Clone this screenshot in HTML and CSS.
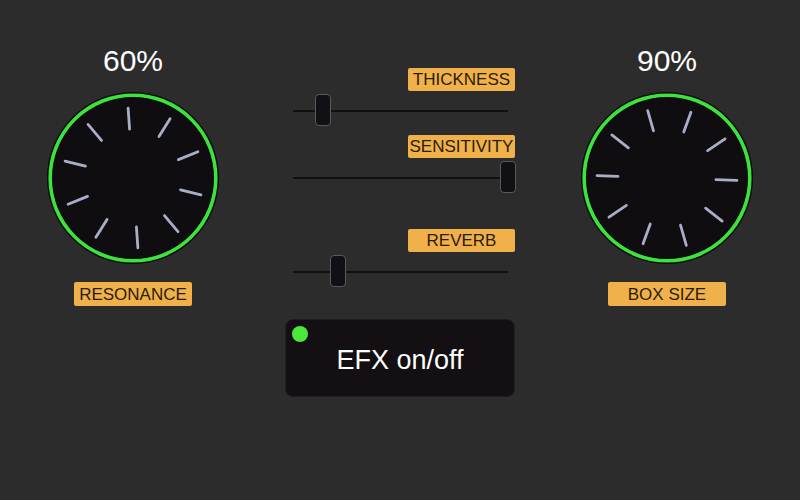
FILE: index.html
```html
<!DOCTYPE html>
<html lang="en">
<head>
    <meta charset="UTF-8">
    <meta name="viewport" content="width=device-width, initial-scale=1.0">
    <title>EFX Panel</title>
    <link rel="stylesheet" href="styles.css">
</head>
<body>
    <svg class="defs" width="0" height="0">
        <symbol id="ticks" viewBox="0 0 172 172">
            <g stroke="#a8aec8" stroke-width="2.8" stroke-linecap="round">
                <line x1="86" y1="16" x2="86" y2="37"/>
                <line x1="86" y1="16" x2="86" y2="37" transform="rotate(36 86 86)"/>
                <line x1="86" y1="16" x2="86" y2="37" transform="rotate(72 86 86)"/>
                <line x1="86" y1="16" x2="86" y2="37" transform="rotate(108 86 86)"/>
                <line x1="86" y1="16" x2="86" y2="37" transform="rotate(144 86 86)"/>
                <line x1="86" y1="16" x2="86" y2="37" transform="rotate(180 86 86)"/>
                <line x1="86" y1="16" x2="86" y2="37" transform="rotate(216 86 86)"/>
                <line x1="86" y1="16" x2="86" y2="37" transform="rotate(252 86 86)"/>
                <line x1="86" y1="16" x2="86" y2="37" transform="rotate(288 86 86)"/>
                <line x1="86" y1="16" x2="86" y2="37" transform="rotate(324 86 86)"/>
            </g>
        </symbol>
    </svg>

    <div class="panel">
        <div class="knob-col">
            <div class="value">60%</div>
            <svg class="knob" width="172" height="172" viewBox="0 0 172 172">
                <circle cx="86" cy="86" r="86" fill="#0b090b"/>
                <circle cx="86" cy="86" r="82.8" fill="none" stroke="#3ce33c" stroke-width="3.6"/>
                <circle cx="86" cy="86" r="80.5" fill="#0f0d10"/>
                <use href="#ticks" width="172" height="172" transform="rotate(-4 86 86)"/>
            </svg>
            <div class="tag">RESONANCE</div>
        </div>

        <div class="mid-col">
            <div class="group">
                <div class="tag small">THICKNESS</div>
                <div class="slider"><div class="thumb" style="left: 14%"></div></div>
            </div>
            <div class="group">
                <div class="tag small">SENSITIVITY</div>
                <div class="slider"><div class="thumb" style="left: 100%"></div></div>
            </div>
            <div class="group spaced">
                <div class="tag small">REVERB</div>
                <div class="slider"><div class="thumb" style="left: 21%"></div></div>
            </div>
            <button class="efx">
                <span class="led"></span>
                EFX on/off
            </button>
        </div>

        <div class="knob-col">
            <div class="value">90%</div>
            <svg class="knob" width="172" height="172" viewBox="0 0 172 172">
                <circle cx="86" cy="86" r="86" fill="#0b090b"/>
                <circle cx="86" cy="86" r="82.8" fill="none" stroke="#3ce33c" stroke-width="3.6"/>
                <circle cx="86" cy="86" r="80.5" fill="#0f0d10"/>
                <use href="#ticks" width="172" height="172" transform="rotate(20 86 86)"/>
            </svg>
            <div class="tag">BOX SIZE</div>
        </div>
    </div>
</body>
</html>
```

FILE: styles.css
```css
body {
    margin: 0;
    width: 800px;
    height: 500px;
    background-color: #2c2c2c;
    font-family: "Liberation Sans", Arial, sans-serif;
    overflow: hidden;
}
.defs {
    position: absolute;
}
.panel {
    display: flex;
    gap: 59px;
    padding: 0 40px;
}
.knob-col {
    width: 186px;
    display: flex;
    flex-direction: column;
    align-items: center;
    padding-top: 44px;
}
.value {
    color: #fff;
    font-size: 30px;
    line-height: 34px;
    height: 34px;
}
.knob {
    display: block;
    margin-top: 14px;
}
.tag {
    width: 118px;
    height: 24px;
    margin-top: 18px;
    background: #f0b14b;
    color: #2b1c05;
    border-radius: 2px;
    font-size: 17px;
    line-height: 25px;
    text-align: center;
}
.tag.small {
    width: 107px;
    height: 23px;
    line-height: 24px;
    margin-top: 0;
    margin-left: auto;
}
.mid-col {
    width: 230px;
    display: flex;
    flex-direction: column;
    padding-top: 68px;
}
.group {
    display: flex;
    flex-direction: column;
}
.group + .group {
    margin-top: 9px;
}
.group.spaced {
    margin-top: 36px;
}
.slider {
    position: relative;
    height: 32px;
    margin: 3px 7px 0 8px;
}
.slider::before {
    content: "";
    position: absolute;
    left: 0;
    right: 0;
    top: 16px;
    height: 2px;
    background: #111;
}
.thumb {
    position: absolute;
    top: 0;
    width: 16px;
    height: 32px;
    box-sizing: border-box;
    transform: translateX(-50%);
    background: #111015;
    border: 1.5px solid #5a5a5e;
    border-radius: 4px;
}
.efx {
    position: relative;
    margin-top: 32px;
    width: 230px;
    height: 78px;
    background: #130f12;
    border: 1px solid #1e1e1e;
    border-radius: 8px;
    color: #fff;
    font-family: "Liberation Sans", Arial, sans-serif;
    font-size: 27px;
    padding: 4px 0 0;
}
.led {
    position: absolute;
    left: 6px;
    top: 6px;
    width: 16px;
    height: 16px;
    border-radius: 50%;
    background: #4be83b;
}
```
